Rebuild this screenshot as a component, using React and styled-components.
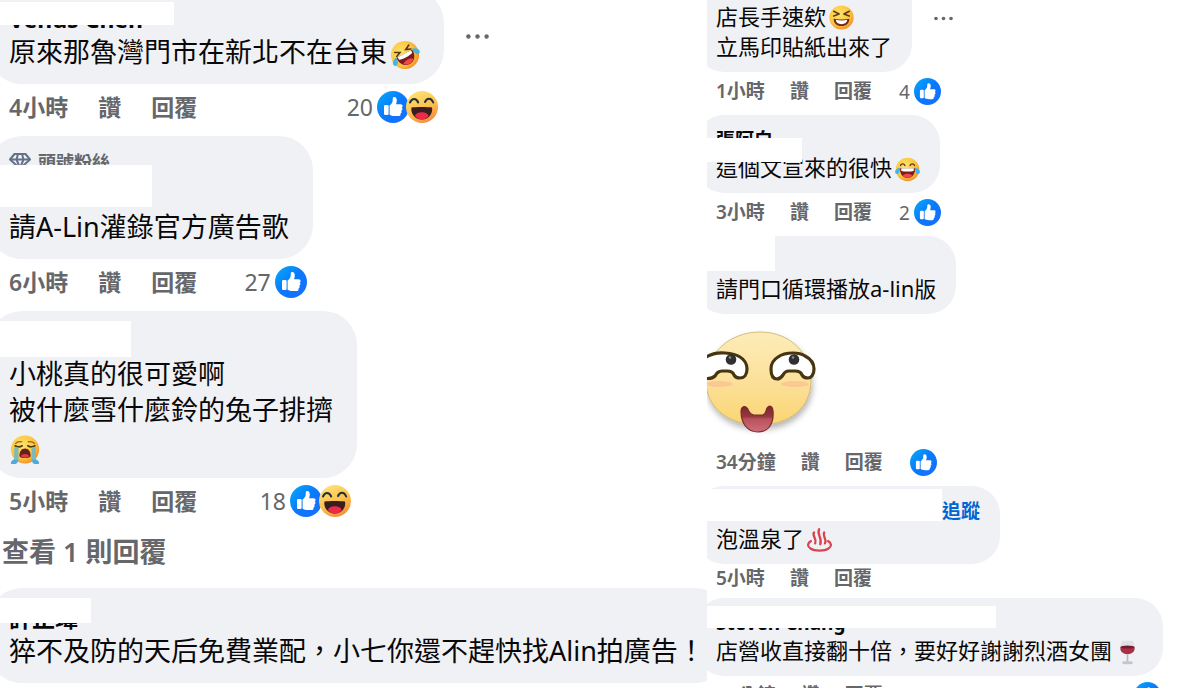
import React from "react";
import styled, { createGlobalStyle, css } from "styled-components";

const GlobalStyle = createGlobalStyle`
  * {
    box-sizing: border-box;
  }
  body {
    margin: 0;
    background: #fff;
  }
`;

const Page = styled.main`
  display: grid;
  grid-template-columns: minmax(0, 707fr) minmax(0, 493fr);
  height: 100vh;
  overflow: hidden;
  background: #fff;
  color: #080809;
  font-family: "Noto Sans", "Noto Sans CJK TC", sans-serif;
  white-space: nowrap;
`;

const large = css`
  --text: 27px;
  --line: 36px;
  --name: 23px;
  --name-line: 33px;
  --meta: 23px;
  --meta-line: 46px;
  --meta-gap: 30px;
  --space: 6px;
  --inset: 12px;
  --pad-top: 12px;
  --pad-right: 24px;
  --pad-bottom: 14px;
  --radius: 34px;
  --icon: 32px;
  --emoji: 30px;
  --react-inset: 6px;
  --dots: 23px;
`;

const small = css`
  --text: 22px;
  --line: 30px;
  --name: 19px;
  --name-line: 27px;
  --meta: 19px;
  --meta-line: 39px;
  --meta-gap: 25px;
  --space: 4px;
  --inset: 11px;
  --pad-top: 10px;
  --pad-right: 20px;
  --pad-bottom: 11px;
  --radius: 28px;
  --icon: 27px;
  --emoji: 25px;
  --react-inset: 2px;
  --dots: 19px;
`;

const Column = styled.section`
  ${(p) => (p.$size === "large" ? large : small)}
  display: flex;
  flex-direction: column;
  align-items: flex-start;
  min-width: 0;
  overflow: hidden;
`;

const Comment = styled.article`
  display: grid;
  grid-template-columns: max-content max-content;
  column-gap: 20px;
  flex-shrink: 0;
  margin-top: ${(p) => p.$pull || 0}px;
  margin-left: calc(var(--inset) * -1);
`;

const Bubble = styled.div`
  position: relative;
  min-width: ${(p) => p.$minWidth || 0}px;
  padding: var(--pad-top) var(--pad-right) var(--pad-bottom)
    calc(var(--inset) + 9px);
  border-radius: var(--radius);
  background: #f0f1f5;
`;

const Badge = styled.div`
  display: flex;
  align-items: center;
  gap: 7px;
  height: 28px;
  padding-bottom: 3px;
  color: #65676b;
  font-size: 18px;
  font-weight: 600;
`;

const Name = styled.div`
  display: flex;
  justify-content: space-between;
  height: var(--name-line);
  font-size: var(--name);
  font-weight: 700;
  line-height: calc(var(--name-line) + 4px);
`;

const Follow = styled.a`
  margin-left: auto;
  color: #0064d1;
  text-decoration: none;
`;

const Text = styled.p`
  display: flex;
  align-items: center;
  margin: 0;
  height: var(--line);
  font-size: var(--text);
  line-height: var(--line);
`;

// white block that hides the author of a comment
const Mask = styled.span`
  position: absolute;
  left: 0;
  top: ${(p) => p.$top}px;
  width: ${(p) => p.$width}px;
  height: ${(p) => p.$height}px;
  background: #fff;
`;

const MenuButton = styled.button`
  align-self: center;
  padding: 0;
  border: 0;
  background: none;
  line-height: 0;
`;

const Meta = styled.div`
  grid-column: 1;
  display: flex;
  align-items: center;
  gap: var(--meta-gap);
  width: 0;
  min-width: 100%;
  height: ${(p) => (p.$compact ? "28px" : "var(--meta-line)")};
  margin-bottom: ${(p) => (p.$compact ? "6px" : "var(--space)")};
  padding-left: calc(var(--inset) + 9px);
  padding-right: var(--react-inset);
  color: #65676b;
  font-size: var(--meta);
  > * {
    flex-shrink: 0;
  }
`;

const Time = styled.a`
  padding-bottom: 3px;
  color: inherit;
  font-weight: 600;
  text-decoration: none;
`;

const Action = styled.button`
  padding: 0 0 3px;
  border: 0;
  background: none;
  color: inherit;
  font: inherit;
  font-weight: 600;
`;

const Reactions = styled.span`
  display: flex;
  align-items: center;
  gap: 4px;
  margin-left: auto;
  padding-left: 2px;
`;

const ReactionIcons = styled.span`
  display: flex;
  svg + svg {
    margin-left: -3px;
  }
`;

const MoreReplies = styled.button`
  flex-shrink: 0;
  height: 44px;
  margin-bottom: 14px;
  padding: 0 2px 3px;
  border: 0;
  background: none;
  color: #65676b;
  font: inherit;
  font-size: var(--text);
  font-weight: 600;
`;

const StickerBox = styled.div`
  height: 129px;
  padding-top: 16px;
  padding-left: var(--inset);
`;

const Glyph = styled.svg`
  width: ${(p) => p.$size || "var(--emoji)"};
  height: ${(p) => p.$size || "var(--emoji)"};
  margin-left: ${(p) => p.$gap || 0}px;
  margin-top: ${(p) => p.$drop || 0}px;
  flex-shrink: 0;
`;

const Defs = styled.svg`
  position: absolute;
`;

function Gradients() {
  return (
    <Defs width="0" height="0" aria-hidden="true">
      <defs>
        <linearGradient id="blue" x1="0" y1="0" x2="1" y2="1">
          <stop offset="0" stopColor="#02adfc" />
          <stop offset="0.5" stopColor="#0a78fb" />
          <stop offset="1" stopColor="#1a6dff" />
        </linearGradient>
        <radialGradient id="yellow" cx="0.4" cy="0.35" r="0.7">
          <stop offset="0" stopColor="#ffe36b" />
          <stop offset="0.65" stopColor="#fbc43e" />
          <stop offset="1" stopColor="#ee8b2c" />
        </radialGradient>
        <linearGradient id="haha" x1="0.2" y1="0" x2="0.7" y2="1">
          <stop offset="0" stopColor="#ffe477" />
          <stop offset="0.55" stopColor="#fcc14f" />
          <stop offset="1" stopColor="#f58a3b" />
        </linearGradient>
        <linearGradient id="skin" x1="0" y1="0" x2="0" y2="1">
          <stop offset="0" stopColor="#fdecb8" />
          <stop offset="0.5" stopColor="#fce19d" />
          <stop offset="1" stopColor="#fad571" />
        </linearGradient>
        <linearGradient id="tongue" x1="0" y1="0" x2="0" y2="1">
          <stop offset="0" stopColor="#7c252c" />
          <stop offset="0.4" stopColor="#94383f" />
          <stop offset="0.5" stopColor="#b9525d" />
          <stop offset="1" stopColor="#cd6e79" />
        </linearGradient>
      </defs>
    </Defs>
  );
}

function LikeIcon() {
  return (
    <Glyph $size="var(--icon)" viewBox="0 0 32 32" aria-label="讚">
      <circle cx="16" cy="16" r="16" fill="url(#blue)" />
      <rect x="7" y="14" width="4.6" height="10" rx="1.2" fill="#fff" />
      <path
        fill="#fff"
        d="M12.6 14.6c1.8-1.5 3-3 3.1-5.1V8.2c0-1.5.6-2.1 1.6-2.1 1.7 0 2.5 1.5 2.5 3.4 0 1.4-.4 2.7-.8 3.7h4.6c1.3 0 2 .8 2 1.8 0 .8-.4 1.3-.9 1.6.4.3.7.8.7 1.5 0 .9-.5 1.5-1.2 1.7.2.3.4.7.4 1.2 0 .9-.6 1.5-1.3 1.7.1.2.2.5.2.8 0 1.1-.9 1.6-2 1.6h-3.8c-2 0-3.8-.5-5.1-1.3z"
      />
    </Glyph>
  );
}

function HahaIcon() {
  return (
    <Glyph $size="var(--icon)" viewBox="0 0 32 32" aria-label="哈">
      <circle cx="16" cy="16" r="16" fill="url(#haha)" />
      <g fill="none" stroke="#263238" strokeWidth="2" strokeLinecap="round" strokeLinejoin="round">
        <path d="M4 11.5c1.200-2.600 2.400-3.500 4-3.500 1.900 0 3.300 1.300 4.200 3.500" />
        <path d="M19 11c.9-2.200 2.200-3.300 4-3.300 1.700 0 3.200 1.300 4.200 3.800" />
      </g>
      <path d="M5.500 16.500c3.500-.8 17-.8 20.500 0 1.200 5.500-3 12-10.200 12S4.300 22 5.500 16.500z" fill="#3c1d1d" />
      <path d="M9 25c.6-2.600 3.200-3.700 6.800-3.700s6.200 1.100 6.900 3.700c-1.800 2.200-4.200 3.500-6.900 3.500S10.700 27.200 9 25z" fill="#ed2b48" />
    </Glyph>
  );
}

function JoyEmoji({ tilt }) {
  return (
    <Glyph $gap={3} $drop={5} viewBox="0 0 32 32" aria-label="😂">
      <g transform={tilt ? "rotate(-28 16 16)" : undefined}>
        <circle cx="16" cy="16" r="15" fill="url(#yellow)" />
        <g fill="none" stroke="#5b3517" strokeWidth="1.7" strokeLinecap="round">
          {tilt ? (
            <path d="M7.500 8.500l5 2.700-5 2M24.500 8.500l-5 2.700 5 2" />
          ) : (
            <path d="M7 11c1.200-3 4.500-3 5.700 0M19.300 11c1.200-3 4.500-3 5.700 0" />
          )}
        </g>
        <path d="M6.500 14.500h19c.6 7-3.500 12.500-9.500 12.500S5.900 21.500 6.500 14.500z" fill="#7d1a1c" />
        <path d="M8 14.500h16v3c-4 1.500-12 1.500-16 0z" fill="#fff" />
        <path d="M10 23.700c2.800-3 9.200-3 12 0-2.600 3.600-9.400 3.600-12 0z" fill="#f04848" />
        <path d="M7 13.500c-4 .5-7.500 3.500-6.700 6.500.8 2.500 4.300 2.200 5.200-.4.700-2 .8-4 1.500-6.100z" fill="#43b5e2" />
        <path d="M25 13.500c4 .5 7.500 3.500 6.700 6.500-.8 2.500-4.300 2.200-5.200-.4-.7-2-.8-4-1.500-6.100z" fill="#43b5e2" />
      </g>
    </Glyph>
  );
}

function CryEmoji() {
  return (
    <Glyph $gap={1} $drop={7} viewBox="0 0 32 32" aria-label="😭">
      <circle cx="16" cy="15.500" r="15" fill="url(#yellow)" />
      <path d="M5.500 9.500c2-2.500 4.500-2.700 7.500-2.200M26.500 9.500c-2-2.500-4.500-2.700-7.500-2.200" fill="none" stroke="#9a641c" strokeWidth="1.300" />
      <path d="M5.500 11.500c2.500 1.500 5 1.500 7.500 0M19 11.500c2.500 1.500 5 1.500 7.500 0" fill="none" stroke="#4d3a16" strokeWidth="1.800" strokeLinecap="round" />
      <path d="M4.500 13H9v13c0 2-1 4-3 5H1c0-2.500 1-3.500 2-4 1.500-.9 1.500-2 1.500-4zM27.500 13H23v13c0 2 1 4 3 5h5c0-2.500-1-3.500-2-4-1.500-.9-1.500-2-1.500-4z" fill="#7fb9b8" />
      <path d="M1 31c0-3 2-4.500 4-4.500h3.500C8 29 7 30.500 5.500 31zM31 31c0-3-2-4.500-4-4.500h-3.500c.5 2.500 1.500 4 3 4.500z" fill="#4fa9dc" />
      <path d="M10 22c0-4.500 2.500-7.500 6-7.500s6 3 6 7.500c0 3.500-12 3.500-12 0z" fill="#65201b" />
      <path d="M11.500 22.500c1.500-3 7.500-3 9 0-1.500 2.200-7.500 2.200-9 0z" fill="#e23b3e" />
    </Glyph>
  );
}

function LaughEmoji() {
  return (
    <Glyph $gap={3} $drop={3} viewBox="0 0 32 32" aria-label="😆">
      <circle cx="16" cy="16" r="15.500" fill="url(#yellow)" />
      <path d="M6 8l7 3.500-7 2.500M26 8l-7 3.500 7 2.500" fill="none" stroke="#5b3a17" strokeWidth="2" strokeLinecap="round" strokeLinejoin="round" />
      <path d="M6 17.500c5 1.300 15 1.300 20 0 .3 5.500-4 9.500-10 9.500S5.700 23 6 17.500z" fill="#6e2b18" />
      <path d="M8.500 19c4.500 1 10.500 1 15 0-.3 3.500-3.200 5.500-7.500 5.500S8.800 22.500 8.500 19z" fill="#fff" />
    </Glyph>
  );
}

function SpringEmoji() {
  return (
    <Glyph $gap={3} $drop={3} viewBox="0 0 32 32" aria-label="♨">
      <g fill="none" stroke="#d8434f" strokeLinecap="round">
        <path d="M5 18C0 21 .5 25 4.500 27.500c5 3.500 18 3.500 23 0 4-2.500 4.500-6.500-.5-9.500" strokeWidth="2.800" />
        <path d="M9 7c-3 5 4 7 1.500 14M15.500 3c-3.500 7 4.500 10 1.500 19M22 7c-3 5 4 7 1 14" strokeWidth="3" />
      </g>
    </Glyph>
  );
}

function WineEmoji() {
  return (
    <Glyph $gap={3} $drop={4} viewBox="0 0 32 32" aria-label="🍷">
      <path d="M9 1h14c2 6 3 9 2 12-1 3.500-4 6-9 6s-8-2.500-9-6c-1-3 0-6 2-12z" fill="#dfe1e6" />
      <path d="M7 9h18c.9 5-2.500 9-9 9S6.100 14 7 9z" fill="#a92e46" />
      <ellipse cx="16" cy="9" rx="9" ry="2" fill="#741d31" />
      <path d="M15 18h2v9h-2z" fill="#b5b8bf" />
      <ellipse cx="16" cy="29" rx="7" ry="2" fill="#c3c6cc" />
    </Glyph>
  );
}

function DiamondIcon() {
  return (
    <svg width="22" height="18" viewBox="0 0 22 18" aria-hidden="true">
      <g fill="none" stroke="#65708a" strokeWidth="2" strokeLinejoin="round">
        <path d="M5.500 2h11L21 7.500 11 16.500 1 7.500z" />
        <path d="M1 7.500h20M9 2L7.500 7.500 11 16l3.500-8.500L13 2" />
      </g>
    </svg>
  );
}

function Sticker() {
  return (
    <svg width="112" height="108" viewBox="0 0 112 108" role="img" aria-label="貼圖">
      <defs>
        <filter id="soft" x="-20%" y="-20%" width="140%" height="150%">
          <feDropShadow dx="1" dy="4" stdDeviation="3" floodColor="#000" floodOpacity="0.3" />
        </filter>
      </defs>
      <path
        d="M53 2C84 2 104 24 104 51c0 27-22 44-52 44S-1 78-1 51C-1 24 22 2 53 2z"
        fill="url(#skin)"
        stroke="#c9ae68"
        strokeWidth="0.8"
        filter="url(#soft)"
      />
      <ellipse cx="12" cy="54" rx="14" ry="3" fill="#f9b991" opacity="0.6" />
      <ellipse cx="88" cy="54" rx="14" ry="3" fill="#f9b991" opacity="0.6" />
      <g fill="#fff" stroke="#453611" strokeWidth="3.200" strokeLinejoin="round">
        <path d="M-4 29C4 23 12 22.500 18 23c7 .5 12 2 15 4 5 3 7 7 7 12 0 6-3 9-7 9-3 0-5-1-6-3-1-3-4-4-7-4h-5c-4 0-5 2-7 5-2 2-7 3-12 2" />
        <path d="M64 39c0-5 2-9 7-12 4-3 9-4 15-4 5 0 9 1 12 3 6 3 9 7 9 13 0 6-3 9-6 9s-5-1-6-3c-1-3-4-4-7-4h-6c-3 0-5 2-6 4-2 3-4 4-6 4-4 0-6-4-6-10z" />
      </g>
      <circle cx="24" cy="29.500" r="5.300" fill="#303030" />
      <circle cx="87" cy="29.500" r="5.300" fill="#303030" />
      <circle cx="23" cy="27.500" r="1.300" fill="#888" />
      <circle cx="86" cy="27.500" r="1.300" fill="#888" />
      <path
        d="M34 81c0-4 4-6 6-3 2 2 2 7 7 7h8c4 0 4-5 5-7 3-4 6-1 6 3 1 12-4 21-15 21S34 93 34 81z"
        fill="url(#tongue)"
        stroke="#7a2b2c"
        strokeWidth="1.200"
      />
    </svg>
  );
}

function Menu() {
  return (
    <MenuButton type="button" aria-label="更多">
      <Glyph $size="var(--dots)" $gap={2} viewBox="0 0 24 24">
        <g fill="#65676b">
          <circle cx="2.500" cy="12" r="2.300" />
          <circle cx="12" cy="12" r="2.300" />
          <circle cx="21.500" cy="12" r="2.300" />
        </g>
      </Glyph>
    </MenuButton>
  );
}

function MetaRow({ time, count, like, haha }) {
  return (
    <Meta $compact={!like}>
      <Time href="#">{time}</Time>
      <Action type="button">讚</Action>
      <Action type="button">回覆</Action>
      {like && (
        <Reactions>
          {count}
          <ReactionIcons>
            <LikeIcon />
            {haha && <HahaIcon />}
          </ReactionIcons>
        </Reactions>
      )}
    </Meta>
  );
}

function App() {
  return (
    <>
      <GlobalStyle />
      <Gradients />
      <Page lang="zh-TW">
        <Column $size="large">
          <Comment $pull={-11}>
            <Bubble>
              <Name>Venus Chen</Name>
              <Text>
                原來那魯灣門市在新北不在台東
                <JoyEmoji tilt />
              </Text>
              <Mask $top={13} $width={186} $height={23} />
            </Bubble>
            <Menu />
            <MetaRow time="4小時" count="20" like haha />
          </Comment>
          <Comment>
            <Bubble>
              <Badge>
                <DiamondIcon />
                頭號粉絲
              </Badge>
              <Name />
              <Text>請A-Lin灌錄官方廣告歌</Text>
              <Mask $top={29} $width={164} $height={42} />
            </Bubble>
            <MetaRow time="6小時" count="27" like />
          </Comment>
          <Comment>
            <Bubble>
              <Name />
              <Text>小桃真的很可愛啊</Text>
              <Text>被什麼雪什麼鈴的兔子排擠</Text>
              <Text>
                <CryEmoji />
              </Text>
              <Mask $top={10} $width={143} $height={36} />
            </Bubble>
            <MetaRow time="5小時" count="18" like haha />
          </Comment>
          <MoreReplies type="button">查看 1 則回覆</MoreReplies>
          <Comment>
            <Bubble>
              <Name>許正瑋</Name>
              <Text>猝不及防的天后免費業配，小七你還不趕快找Alin拍廣告！</Text>
              <Mask $top={10} $width={103} $height={25} />
            </Bubble>
          </Comment>
        </Column>

        <Column $size="small">
          <Comment $pull={-36}>
            <Bubble>
              <Name />
              <Text>
                店長手速欸
                <LaughEmoji />
              </Text>
              <Text>立馬印貼紙出來了</Text>
            </Bubble>
            <Menu />
            <MetaRow time="1小時" count="4" like />
          </Comment>
          <Comment>
            <Bubble>
              <Name>張阿白</Name>
              <Text>
                這個文宣來的很快
                <JoyEmoji />
              </Text>
              <Mask $top={23} $width={106} $height={24} />
            </Bubble>
            <MetaRow time="3小時" count="2" like />
          </Comment>
          <Comment>
            <Bubble>
              <Name />
              <Text>請門口循環播放a-lin版</Text>
              <Mask $top={0} $width={79} $height={35} />
            </Bubble>
          </Comment>
          <Comment>
            <StickerBox>
              <Sticker />
            </StickerBox>
            <MetaRow time="34分鐘" like />
          </Comment>
          <Comment>
            <Bubble $minWidth={304}>
              <Name>
                <Follow href="#">追蹤</Follow>
              </Name>
              <Text>
                泡溫泉了
                <SpringEmoji />
              </Text>
              <Mask $top={3} $width={246} $height={32} />
            </Bubble>
            <MetaRow time="5小時" />
          </Comment>
          <Comment>
            <Bubble $minWidth={467}>
              <Name>Steven Chang</Name>
              <Text>
                店營收直接翻十倍，要好好謝謝烈酒女團
                <WineEmoji />
              </Text>
              <Mask $top={8} $width={300} $height={22} />
            </Bubble>
            <MetaRow time="34分鐘" like />
          </Comment>
        </Column>
      </Page>
    </>
  );
}

export default App;
